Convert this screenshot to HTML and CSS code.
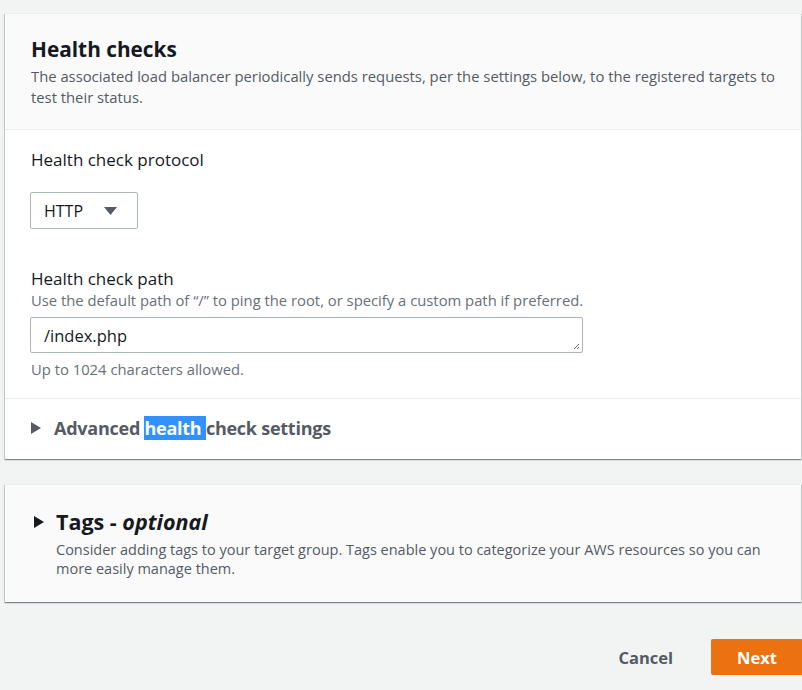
FILE: index.html
```html
<!DOCTYPE html>
<html lang="en">
<head>
<meta charset="utf-8">
<title>Health checks</title>
<link rel="stylesheet" href="styles.css">
</head>
<body>
<div class="page">
  <section class="card">
    <header class="card-header">
      <h2 class="card-title">Health checks</h2>
      <p class="card-desc">The associated load balancer periodically sends requests, per the settings below, to the registered targets to test their status.</p>
    </header>
    <div class="card-body">
      <div class="field">
        <div class="label">Health check protocol</div>
        <div class="select">
          <span class="select-value">HTTP</span>
          <svg class="caret" width="13" height="8" viewBox="0 0 13 8"><path d="M0 0 H13 L6.5 8 Z" fill="#545b64"/></svg>
        </div>
      </div>
      <div class="field field-path">
        <div class="label">Health check path</div>
        <div class="hint">Use the default path of “/” to ping the root, or specify a custom path if preferred.</div>
        <div class="textarea">
          <span class="textarea-value">/index.php</span>
          <svg class="grip" width="8" height="8" viewBox="0 0 8 8"><path d="M7 2 L2 7 M7 5 L5 7" stroke="#6b6b6b" stroke-width="1"/></svg>
        </div>
        <div class="note">Up to 1024 characters allowed.</div>
      </div>
    </div>
    <div class="expander">
      <svg class="tri" width="10" height="12" viewBox="0 0 10 12"><path d="M0 0 L10 6 L0 12 Z" fill="#545b64"/></svg>
      <span class="expander-text">Advanced <span class="sel">health </span>check settings</span>
    </div>
  </section>

  <section class="card card-tags">
    <div class="tags-title">
      <svg class="tri" width="10" height="12" viewBox="0 0 10 12"><path d="M0 0 L10 6 L0 12 Z" fill="#16191f"/></svg>
      <span>Tags - <em>optional</em></span>
    </div>
    <p class="tags-desc">Consider adding tags to your target group. Tags enable you to categorize your AWS resources so you can more easily manage them.</p>
  </section>

  <div class="actions">
    <button class="btn-link">Cancel</button>
    <button class="btn-primary">Next</button>
  </div>
</div>
</body>
</html>
```

FILE: styles.css
```css
html, body {
  margin: 0;
  padding: 0;
  background: #f2f3f3;
}
body {
  font-family: "Open Sans", "Noto Sans", sans-serif;
  color: #16191f;
  overflow: hidden;
}
.page {
  padding: 13px 1px 0 5px;
}
.card {
  background: #ffffff;
  border-top: 1px solid #eaeded;
  box-shadow: 0 1px 1px 0 rgba(0, 28, 36, 0.3), 1px 1px 1px 0 rgba(0, 28, 36, 0.15), -1px 1px 1px 0 rgba(0, 28, 36, 0.15);
}
.card-header {
  background: #fafafa;
  padding: 20px 26px 21px;
  border-bottom: 1px solid #eaeded;
}
.card-title {
  margin: 0;
  font-size: 20.8px;
  line-height: 30px;
  font-weight: 700;
}
.card-desc {
  margin: 2px 0 0;
  font-size: 14.8px;
  line-height: 21px;
  color: #545b64;
}
.card-body {
  padding: 19px 26px 19px 25px;
  border-bottom: 1px solid #eaeded;
}
.label {
  font-size: 17px;
  line-height: 22px;
  padding-left: 1px;
}
.select {
  margin-top: 21px;
  height: 35px;
  border: 1px solid #aab7b8;
  border-radius: 2px;
  display: flex;
  align-items: center;
  padding-left: 13px;
  width: 93px;
  gap: 21px;
}
.select-value {
  font-size: 16px;
}
.field-path {
  margin-top: 39px;
}
.hint {
  font-size: 14.8px;
  line-height: 20px;
  color: #687078;
  padding-left: 1px;
}
.textarea {
  margin-top: 7px;
  width: 538px;
  height: 34px;
  border: 1px solid #aab7b8;
  border-radius: 2px;
  padding-left: 13px;
  display: flex;
  align-items: center;
  position: relative;
}
.textarea-value {
  font-size: 16.5px;
}
.grip {
  position: absolute;
  right: 2px;
  bottom: 2px;
}
.note {
  margin-top: 6px;
  font-size: 14.8px;
  line-height: 20px;
  color: #687078;
  padding-left: 1px;
}
.expander {
  display: flex;
  align-items: center;
  gap: 13px;
  padding: 17px 26px 19px;
  font-size: 18px;
  line-height: 24px;
  font-weight: 700;
  color: #545b64;
}
.expander-text {
  letter-spacing: -0.25px;
}
.sel {
  background: #3390ff;
  color: #ffffff;
}
.card-tags {
  margin-top: 25px;
  background: #fafafa;
  padding: 23px 26px 24px 29px;
}
.tags-title {
  display: flex;
  align-items: center;
  gap: 12px;
  font-size: 21.5px;
  line-height: 28px;
  font-weight: 700;
}
.tags-title em {
  font-style: italic;
}
.tags-desc {
  margin: 4px 0 0 22px;
  font-size: 14.5px;
  line-height: 19px;
  color: #545b64;
}
.actions {
  display: flex;
  justify-content: flex-end;
  align-items: center;
  gap: 38px;
  margin-top: 37px;
  margin-right: -2px;
}
.btn-link {
  background: none;
  border: none;
  padding: 0;
  font-family: inherit;
  font-size: 16.5px;
  font-weight: 700;
  color: #545b64;
}
.btn-primary {
  background: #ec7211;
  border: none;
  border-radius: 2px;
  color: #ffffff;
  font-family: inherit;
  font-size: 16.5px;
  font-weight: 700;
  width: 92px;
  height: 36px;
  padding: 0;
}
```
